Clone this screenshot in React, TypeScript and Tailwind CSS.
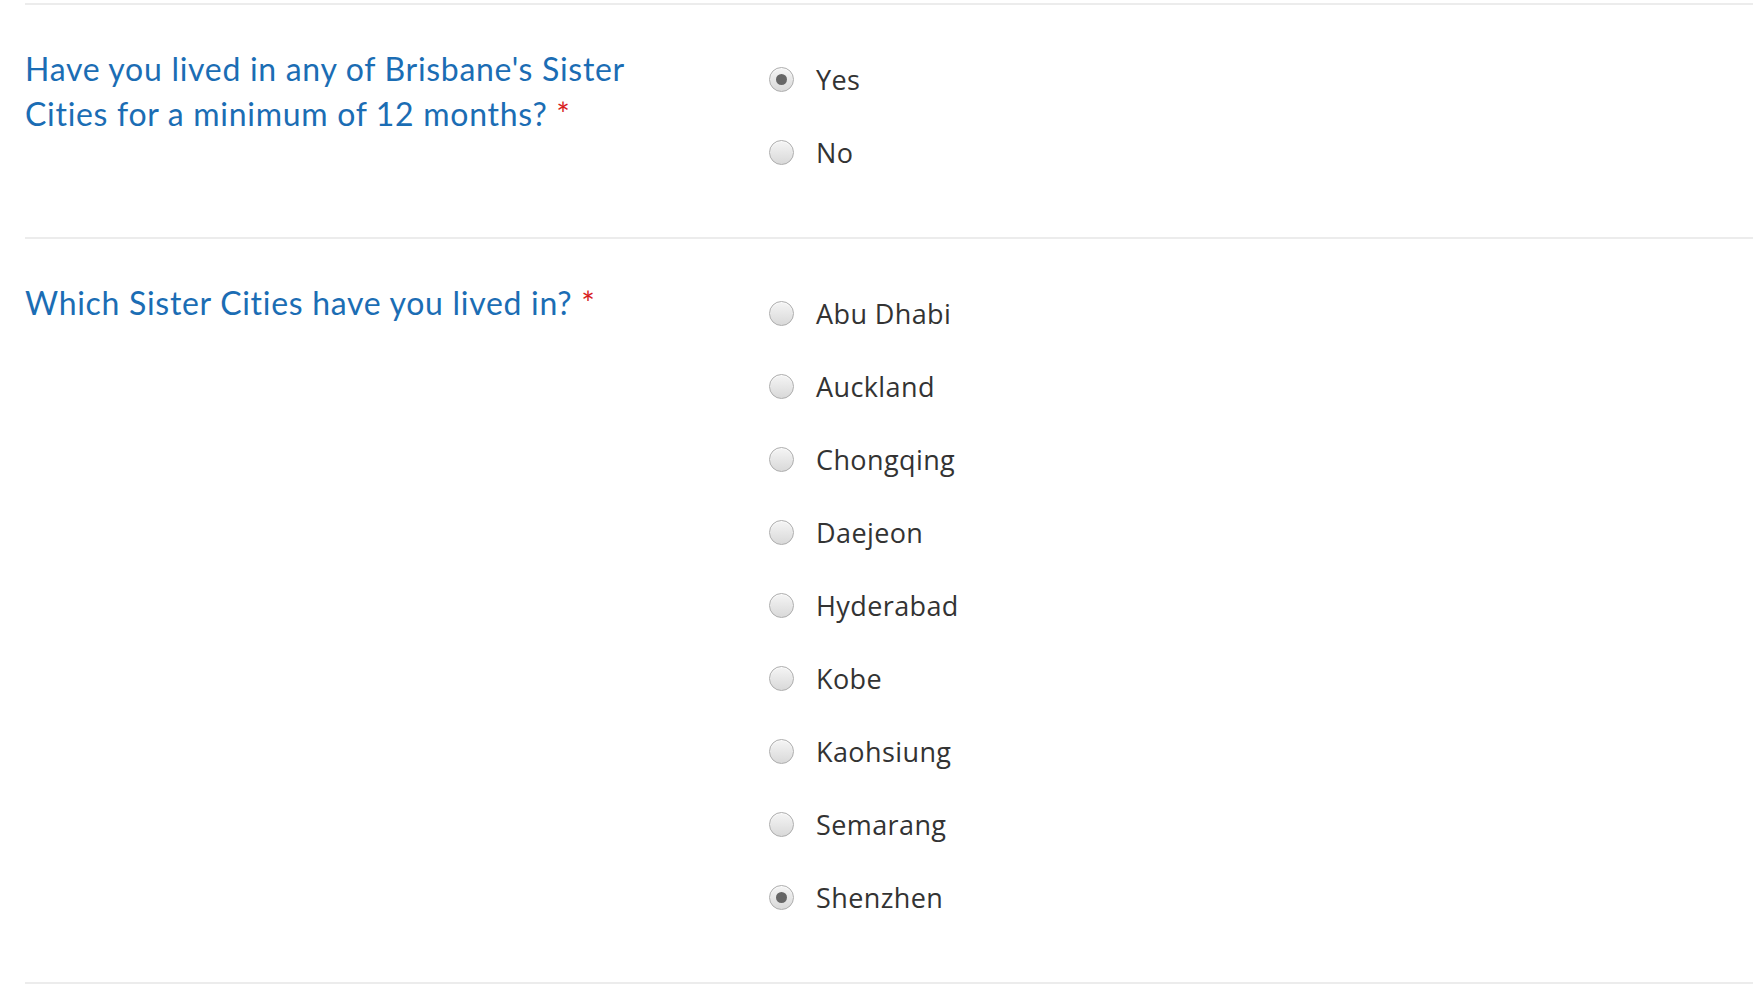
const QUESTIONS = [
  {
    id: "lived",
    label: "Have you lived in any of Brisbane's Sister Cities for a minimum of 12 months?",
    options: ["Yes", "No"],
    selected: "Yes",
  },
  {
    id: "cities",
    label: "Which Sister Cities have you lived in?",
    options: [
      "Abu Dhabi",
      "Auckland",
      "Chongqing",
      "Daejeon",
      "Hyderabad",
      "Kobe",
      "Kaohsiung",
      "Semarang",
      "Shenzhen",
    ],
    selected: "Shenzhen",
  },
];

function Radio({ checked }: { checked: boolean }) {
  return (
    <span className="flex h-[25px] w-[25px] shrink-0 items-center justify-center rounded-full border border-[#adadad] bg-gradient-to-b from-[#f5f5f5] to-[#d9d9d9] shadow-[inset_0_1px_1px_rgba(255,255,255,0.8)]">
      {checked && <span className="h-[11px] w-[11px] rounded-full bg-[#666666]" />}
    </span>
  );
}

export default function App() {
  return (
    <div className="min-h-screen bg-white pt-[3px] pl-[25px]">
      <div className="border-t-2 border-[#ececec]">
        {QUESTIONS.map((q) => (
          <div key={q.id} className="flex border-b-2 border-[#ececec]">
            <div className="w-[744px] shrink-0 pt-[41px]">
              <p
                className="max-w-[660px] text-[32px] leading-[45px] tracking-[0.7px] text-[#1b6db4]"
                style={{ fontFamily: "Lato, 'Open Sans', sans-serif" }}
              >
                {q.label}
                <span className="text-[#d81e1e]"> *</span>
              </p>
            </div>
            <div className="flex flex-col pt-[38px] pb-[48px]">
              {q.options.map((opt) => (
                <label key={opt} className="flex h-[73px] items-center gap-[22px]">
                  <Radio checked={opt === q.selected} />
                  <span className="pt-[2px] font-['Open_Sans',sans-serif] text-[27px] tracking-[0.4px] text-[#333333]">
                    {opt}
                  </span>
                </label>
              ))}
            </div>
          </div>
        ))}
      </div>
    </div>
  );
}
